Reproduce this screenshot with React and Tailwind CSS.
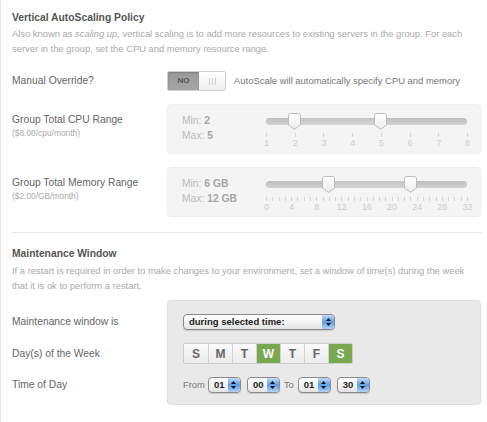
import React from 'react';

const FONT = "font-['Liberation_Sans',Arial,Helvetica,sans-serif]";

function Handle({ left }) {
  return (
    <svg
      width="13"
      height="17"
      viewBox="0 0 13 17"
      className="absolute top-[-5px]"
      style={{ left: left - 6.5 }}
    >
      <defs>
        <linearGradient id="hg" x1="0" y1="0" x2="0" y2="1">
          <stop offset="0" stopColor="#ffffff" />
          <stop offset="1" stopColor="#ececec" />
        </linearGradient>
      </defs>
      <path
        d="M2.5 0.5 H10.5 Q12.5 0.5 12.5 2.5 V12 L6.5 16.3 L0.5 12 V2.5 Q0.5 0.5 2.5 0.5 Z"
        fill="url(#hg)"
        stroke="#bdbdbd"
      />
    </svg>
  );
}

function Slider({ min, max, lo, hi, labels, minor, tickGap }) {
  const W = 201;
  const pos = (v) => ((v - min) / (max - min)) * W;
  const ticks = [];
  for (let v = min; v <= max; v += minor) ticks.push(v);
  return (
    <div className="w-[201px]">
      <div className="relative h-[7px] rounded-full bg-gradient-to-b from-[#bdbdbd] to-[#d2d2d2]">
        <div
          className="absolute top-0 h-[7px] bg-gradient-to-b from-[#c4c4c4] to-[#d6d6d6]"
          style={{ left: pos(lo), width: pos(hi) - pos(lo) }}
        />
        <Handle left={pos(lo)} />
        <Handle left={pos(hi)} />
      </div>
      <div className={`relative h-[4px] ${tickGap}`}>
        {ticks.map((v) => (
          <div
            key={v}
            className="absolute top-0 w-px h-[4px] bg-[#d4d4d4]"
            style={{ left: Math.round(pos(v)) }}
          />
        ))}
      </div>
      <div className="relative h-[12px]">
        {labels.map((v) => (
          <span
            key={v}
            className="absolute top-0 text-[9px] leading-[12px] text-[#cdcdcd] -translate-x-1/2"
            style={{ left: pos(v) + 0.5 }}
          >
            {v}
          </span>
        ))}
      </div>
    </div>
  );
}

function ArrowBox() {
  return (
    <div className="w-[12px] self-stretch rounded-r-[4px] bg-gradient-to-b from-[#c2dcf7] via-[#5b9de4] to-[#b1d2f4] flex flex-col items-center justify-center gap-[2px]">
      <svg width="5" height="3" viewBox="0 0 5 3">
        <path d="M2.5 0 L5 3 H0 Z" fill="#111" />
      </svg>
      <svg width="5" height="3" viewBox="0 0 5 3">
        <path d="M0 0 H5 L2.5 3 Z" fill="#111" />
      </svg>
    </div>
  );
}

function Select({ children, className }) {
  return (
    <div
      className={`${className} h-[16px] flex items-stretch rounded-[4px] border border-[#8a8a8a] bg-gradient-to-b from-white via-[#f4f4f4] to-[#e3e3e3] shadow-[0_1px_1px_rgba(0,0,0,0.15)] overflow-hidden`}
    >
      <div className="flex-1 flex items-center pl-[5px] text-[9.5px] font-bold text-[#222]">
        {children}
      </div>
      <ArrowBox />
    </div>
  );
}

function RangePanel({ label, sub, minText, maxText, slider }) {
  return (
    <div className="flex">
      <div className="w-[155px] pt-[9px]">
        <div className="text-[10.3px] leading-[14px] text-[#666]">{label}</div>
        <div className="text-[8.4px] leading-[12px] text-[#aaa]">{sub}</div>
      </div>
      <div className="w-[314px] h-[50px] rounded-[4px] bg-[#f4f4f4] border border-[#efefef] flex pl-[14px] pt-[8px]">
        <div className="w-[84px] text-[10.3px] leading-[15px] text-[#bbb]">
          <div>
            Min: <b className="text-[#a6a6a6]">{minText}</b>
          </div>
          <div>
            Max: <b className="text-[#a6a6a6]">{maxText}</b>
          </div>
        </div>
        <div className="pt-[5px]">{slider}</div>
      </div>
    </div>
  );
}

const days = [
  ['S', false],
  ['M', false],
  ['T', false],
  ['W', true],
  ['T', false],
  ['F', false],
  ['S', true],
];

export default function App() {
  return (
    <div className={`w-[487px] h-[422px] bg-white border-l border-[#e6e6e6] pl-[11px] pr-[6px] pt-[11px] ${FONT}`}>
      {/* Vertical AutoScaling */}
      <h3 className="text-[10.3px] leading-[14px] font-bold text-[#555]">Vertical AutoScaling Policy</h3>
      <p className="mt-[1px] w-[460px] text-[9.4px] leading-[15px] text-[#aaa]">
        Also known as <i>scaling up</i>, vertical scaling is to add more resources to existing servers in the group. For each server in the group, set the CPU and memory resource range.
      </p>

      <div className="flex items-center mt-[15px] h-[20px]">
        <div className="w-[155px] text-[10.3px] text-[#666]">Manual Override?</div>
        <div className="flex h-[20px] w-[59px] rounded-[2px] border border-[#cfcfcf] overflow-hidden">
          <div className="w-[31px] bg-gradient-to-b from-[#9a9a9a] to-[#a5a5a5] flex items-center justify-center text-[8px] font-bold text-[#555] shadow-[inset_0_1px_2px_rgba(0,0,0,0.2)]">
            NO
          </div>
          <div className="flex-1 bg-gradient-to-b from-white to-[#efefef] flex items-center justify-center gap-[2px]">
            <div className="w-px h-[7px] bg-[#d0d0d0]" />
            <div className="w-px h-[7px] bg-[#d0d0d0]" />
            <div className="w-px h-[7px] bg-[#d0d0d0]" />
          </div>
        </div>
        <div className="ml-[8px] text-[9.45px] text-[#777]">AutoScale will automatically specify CPU and memory</div>
      </div>

      <div className="mt-[13px] flex flex-col gap-[13px]">
        <RangePanel
          label="Group Total CPU Range"
          sub="($8.00/cpu/month)"
          minText="2"
          maxText="5"
          slider={<Slider min={1} max={8} lo={2} hi={5} minor={1} tickGap="mt-[8px]" labels={[1, 2, 3, 4, 5, 6, 7, 8]} />}
        />
        <RangePanel
          label="Group Total Memory Range"
          sub="($2.00/GB/month)"
          minText="6 GB"
          maxText="12 GB"
          slider={<Slider min={0} max={32} lo={10} hi={23} minor={1} tickGap="mt-[9px]" labels={[0, 4, 8, 12, 16, 20, 24, 28, 32]} />}
        />
      </div>

      <div className="mt-[15px] h-px bg-[#e8e8e8] w-[470px]" />

      {/* Maintenance Window */}
      <h3 className="mt-[14px] text-[10.3px] leading-[14px] font-bold text-[#555]">Maintenance Window</h3>
      <p className="mt-[2px] w-[460px] text-[9.4px] leading-[15px] text-[#aaa]">
        If a restart is required in order to make changes to your environment, set a window of time(s) during the week that it is ok to perform a restart.
      </p>

      <div className="mt-[7px] grid grid-cols-[155px_314px] grid-rows-[auto_auto_auto]">
        <div className="col-start-2 row-start-1 row-span-3 rounded-[4px] bg-[#e9e9e9] border border-[#dedede]" />

        <div className="col-start-1 row-start-1 pt-[14px] flex items-end">
          <div className="h-[16px] flex items-center text-[10.3px] text-[#666]">Maintenance window is</div>
        </div>
        <div className="col-start-2 row-start-1 pt-[14px] pl-[16px]">
          <Select className="w-[152px]">during selected time:</Select>
        </div>

        <div className="col-start-1 row-start-2 pt-[13px] flex items-end">
          <div className="h-[20px] flex items-center text-[10.3px] text-[#666]">Day(s) of the Week</div>
        </div>
        <div className="col-start-2 row-start-2 pt-[13px] pl-[16px]">
          <div className="flex w-fit border border-[#cdcdcd] rounded-[2px] overflow-hidden">
            {days.map(([d, on], i) => (
              <div
                key={i}
                className={`w-[24px] h-[19px] flex items-center justify-center text-[12px] font-bold ${i > 0 ? 'border-l border-[#d2d2d2]' : ''} ${
                  on ? 'bg-[#79a851] text-white' : 'bg-gradient-to-b from-[#fafafa] to-[#ececec] text-[#666]'
                }`}
              >
                {d}
              </div>
            ))}
          </div>
        </div>

        <div className="col-start-1 row-start-3 pt-[13px] pb-[12px] flex items-start">
          <div className="h-[16px] flex items-center text-[10.3px] text-[#666]">Time of Day</div>
        </div>
        <div className="col-start-2 row-start-3 pt-[13px] pb-[12px] pl-[16px] flex items-center text-[9.4px] text-[#777]">
          <span className="mr-[3px]">From</span>
          <Select className="w-[33px]">01</Select>
          <Select className="w-[33px] ml-[6px]">00</Select>
          <span className="mx-[4px]">To</span>
          <Select className="w-[33px]">01</Select>
          <Select className="w-[33px] ml-[6px]">30</Select>
        </div>
      </div>
    </div>
  );
}
